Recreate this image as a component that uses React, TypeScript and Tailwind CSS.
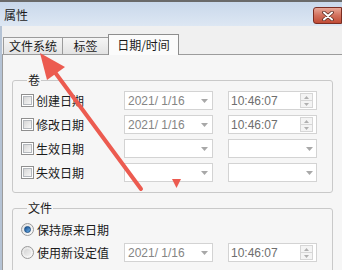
import React from "react";

const CJK = "font-['Noto_Sans_CJK_SC','Liberation_Sans',sans-serif]";

function Checkbox() {
  return (
    <div className="w-[13px] h-[13px] border border-[#8f8f8f] bg-white p-[1px] shrink-0">
      <div className="w-full h-full border border-[#b4b8bd] bg-gradient-to-br from-[#d6d6d6] to-[#f7f7f7]" />
    </div>
  );
}

function Radio({ checked }: { checked?: boolean }) {
  return (
    <div className="w-[13px] h-[13px] rounded-full border border-[#9a9a9a] bg-gradient-to-br from-[#e2e2e2] to-[#fbfbfb] flex items-center justify-center shrink-0">
      {checked ? (
        <div className="w-[7px] h-[7px] rounded-full bg-gradient-to-br from-[#154f8f] to-[#6fb0e8] border border-[#1a4f86]" />
      ) : (
        <div className="w-[7px] h-[7px] rounded-full bg-gradient-to-br from-[#d4d4d4] to-[#f2f2f2]" />
      )}
    </div>
  );
}

function DateBox({ value }: { value?: string }) {
  return (
    <div className="w-[89px] h-[19px] bg-white border border-[#d3d3d3] flex items-center pl-[3px] pr-[4px] shrink-0">
      <span className="flex-1 text-[12px] leading-none text-[#858585] font-['Liberation_Sans',sans-serif] whitespace-pre">
        {value}
      </span>
      <svg width="7" height="4" viewBox="0 0 7 4">
        <path d="M0 0H7L3.5 4Z" fill="#a8a8a8" />
      </svg>
    </div>
  );
}

function TimeBox({ value }: { value?: string }) {
  return (
    <div className="w-[89px] h-[19px] bg-white border border-[#d3d3d3] flex items-center pl-[2px] pr-[3px] shrink-0">
      <span className="flex-1 text-[12px] leading-none text-[#6e6e6e] font-['Liberation_Sans',sans-serif] whitespace-pre">
        {value}
      </span>
      {value ? (
        <div className="w-[13px] h-[15px] border border-[#d6d6d6] bg-[#f4f4f4] flex flex-col">
          <div className="flex-1 flex items-center justify-center border-b border-[#d6d6d6]">
            <svg width="5" height="3" viewBox="0 0 5 3">
              <path d="M0 3H5L2.5 0Z" fill="#b0b0b0" />
            </svg>
          </div>
          <div className="flex-1 flex items-center justify-center">
            <svg width="5" height="3" viewBox="0 0 5 3">
              <path d="M0 0H5L2.5 3Z" fill="#b0b0b0" />
            </svg>
          </div>
        </div>
      ) : (
        <svg width="7" height="4" viewBox="0 0 7 4">
          <path d="M0 0H7L3.5 4Z" fill="#a8a8a8" />
        </svg>
      )}
    </div>
  );
}

function Row({
  control,
  label,
  date,
  time,
}: {
  control: React.ReactNode;
  label: string;
  date?: string;
  time?: string;
}) {
  return (
    <div className="h-[19px] flex items-center">
      <div className="w-[103px] flex items-center gap-[2px]">
        {control}
        <span className={`${CJK} text-[12px] leading-none text-[#1a1a1a] whitespace-nowrap`}>{label}</span>
      </div>
      <DateBox value={date} />
      <div className="w-[15px] shrink-0" />
      <TimeBox value={time} />
    </div>
  );
}

export default function App() {
  return (
    <div className={`relative w-[342px] h-[270px] overflow-hidden bg-[#f0f0f0] flex flex-col ${CJK}`}>
      {/* Title bar */}
      <div className="h-[26px] shrink-0 flex items-start justify-between border-t-[2px] border-[#6a6a6a] bg-gradient-to-b from-[#c9d8eb] to-[#dde7f3]">
        <span className="pl-[4px] pt-[5px] text-[12px] leading-[16px] text-[#1c1c1c]">属性</span>
        <div className="mt-[5px] w-[29px] h-[17px] rounded-l-[3px] border border-[#7b2d22] bg-gradient-to-b from-[#e7a899] via-[#d2705d] to-[#c04a34] flex items-center justify-center">
          <svg width="12" height="10" viewBox="0 0 12 10">
            <path d="M2 1.5L10 8.5M10 1.5L2 8.5" stroke="#5a2a22" strokeWidth="3.6" strokeLinecap="round" />
            <path d="M2 1.5L10 8.5M10 1.5L2 8.5" stroke="#ffffff" strokeWidth="2" strokeLinecap="round" />
          </svg>
        </div>
      </div>

      {/* Body */}
      <div className="flex-1 flex">
        <div className="w-[2px] shrink-0 bg-[#b5c3d5]" />
        <div className="flex-1 flex flex-col">
          {/* Tabs */}
          <div className="h-[28px] pt-[8px] flex items-end pl-[1px]">
            <div className="w-[60px] h-[17px] border border-b-0 border-[#9b9b9b] bg-gradient-to-b from-[#f5f5f5] to-[#e3e3e3] flex items-center justify-center text-[12px] leading-none text-[#1a1a1a]">
              文件系统
            </div>
            <div className="ml-[-1px] w-[47px] h-[17px] border border-b-0 border-[#9b9b9b] bg-gradient-to-b from-[#f5f5f5] to-[#e3e3e3] flex items-center justify-center text-[12px] leading-none text-[#1a1a1a]">
              标签
            </div>
            <div className="ml-[-1px] w-[71px] h-[21px] mb-[-1px] relative z-10 border border-b-0 border-[#8e8e8e] bg-[#fbfbfb] flex items-center justify-center text-[12px] leading-none text-[#1a1a1a]">
              日期/时间
            </div>
          </div>

          {/* Panel */}
          <div className="flex-1 border-l border-t border-[#9c9c9c] bg-[#f6f6f6] pl-[9px] pt-[18px]">
            <fieldset className="w-[321px] border border-[#c9c9c9] rounded-[3px] pl-[8px] pb-[10px]">
              <legend className="ml-[6px] px-[1px] text-[12px] leading-[14px] text-[#1a1a1a]">卷</legend>
              <div className="pt-[4px] flex flex-col gap-[5px]">
                <Row control={<Checkbox />} label="创建日期" date="2021/ 1/16" time="10:46:07" />
                <Row control={<Checkbox />} label="修改日期" date="2021/ 1/16" time="10:46:07" />
                <Row control={<Checkbox />} label="生效日期" />
                <Row control={<Checkbox />} label="失效日期" />
              </div>
            </fieldset>

            <fieldset className="mt-[8px] w-[321px] border border-[#c9c9c9] rounded-[3px] pl-[8px] pb-[10px]">
              <legend className="ml-[6px] px-[1px] text-[12px] leading-[14px] text-[#1a1a1a]">文件</legend>
              <div className="pt-[5px] flex flex-col gap-[4px]">
                <div className="h-[19px] flex items-center gap-[3px]">
                  <Radio checked />
                  <span className="text-[12px] leading-none text-[#1a1a1a]">保持原来日期</span>
                </div>
                <Row control={<div className="mr-[1px]"><Radio /></div>} label="使用新设定值" date="2021/ 1/16" time="10:46:07" />
              </div>
            </fieldset>
          </div>
        </div>
      </div>

      {/* Red annotation arrow */}
      <svg className="absolute left-0 top-0 pointer-events-none" width="342" height="270" viewBox="0 0 342 270">
        <line x1="141" y1="189" x2="54" y2="71" stroke="#ec5b50" strokeWidth="4" strokeLinecap="round" />
        <path d="M40 53 L65 67 L47 80 Z" fill="#ec5b50" />
        <path d="M172 179 L181 179 L176.5 188 Z" fill="#ec5b50" />
      </svg>
    </div>
  );
}
